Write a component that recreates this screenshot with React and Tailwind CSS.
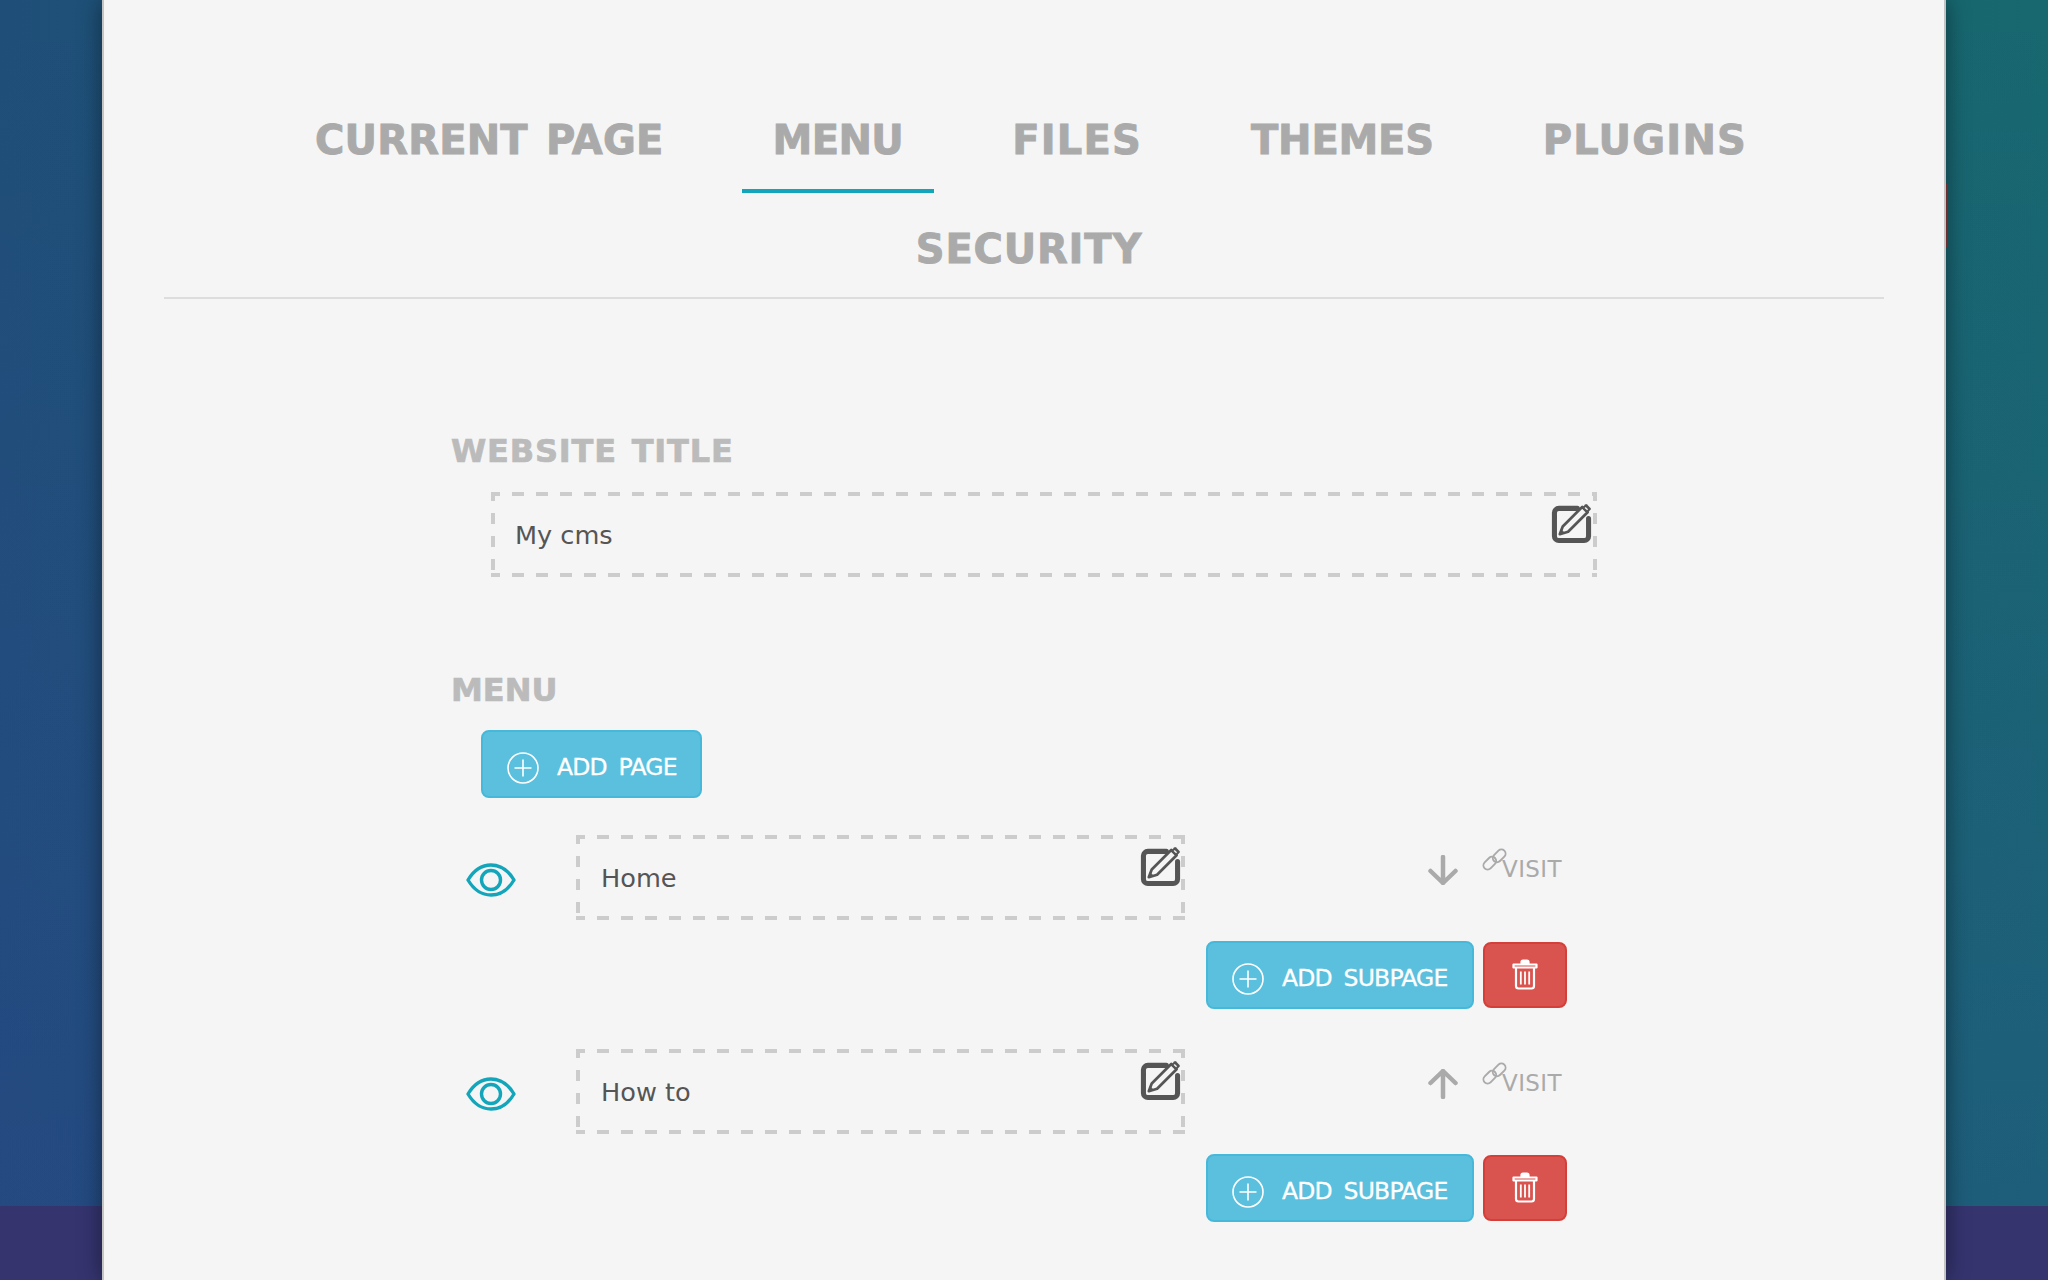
import React from 'react';

const dashed =
  "bg-[repeating-linear-gradient(90deg,#ccc_-3px_9px,transparent_9px_21px),repeating-linear-gradient(90deg,#ccc_-3px_9px,transparent_9px_21px),repeating-linear-gradient(180deg,#ccc_-2px_9px,transparent_9px_21px),repeating-linear-gradient(180deg,#ccc_-2px_9px,transparent_9px_21px)] bg-[size:100%_4px,100%_4px,4px_100%,4px_100%] bg-[position:0_0,0_100%,0_0,100%_0] bg-no-repeat";

function EditIcon({ className }) {
  return (
    <svg viewBox="0 0 40 40" className={`${className} overflow-visible`} fill="none">
      <path d="M26 4.500H7A4.500 4.500 0 0 0 2.500 9v24A4.500 4.500 0 0 0 7 37.500h26a4.500 4.500 0 0 0 4.500-4.500V15" stroke="#555" strokeWidth="5.200" strokeLinecap="round" />
      <path d="M11 23L31 3l5.500 5.500-20 20-8.500 2.500z" fill="#f5f5f5" stroke="#555" strokeWidth="2.800" strokeLinejoin="round" />
      <path d="M8 31l1.500-4.500 3 3z" fill="#555" stroke="#555" strokeWidth="1" strokeLinejoin="round" />
      <path d="M30.500 4l3.500-3.500a1.500 1.500 0 0 1 2 0l3.500 3.500a1.500 1.500 0 0 1 0 2L36 9.500z" fill="#555" />
      <path d="M34.500 3l2.500 2.500-1 1L33.500 4z" fill="#f5f5f5" />
    </svg>
  );
}

function PlusCircle() {
  return (
    <svg viewBox="0 0 32 32" className="w-8 h-8 shrink-0" fill="none" stroke="#fff" strokeWidth="1.600">
      <circle cx="16" cy="16" r="15" />
      <path d="M16 7.500v17M7.500 16h17" />
    </svg>
  );
}

function EyeIcon() {
  return (
    <svg viewBox="0 0 50 34" className="w-[50px] h-[34px]" fill="none" stroke="#13a5ba" strokeWidth="3.400">
      <path d="M2 17C8 7 16 2 25 2s17 5 23 15c-6 10-14 15-23 15S8 27 2 17z" strokeLinejoin="round" />
      <circle cx="25" cy="17" r="9.500" />
    </svg>
  );
}

function TrashIcon() {
  return (
    <svg viewBox="0 0 26 31" className="w-[26px] h-[31px] -mt-[2px]" fill="none" stroke="#fff" strokeWidth="2.200" strokeLinejoin="round">
      <path d="M1.500 5.500h23v3h-23z" />
      <path d="M9.500 5V3a1.500 1.500 0 0 1 1.500-1.500h4A1.500 1.500 0 0 1 16.500 3v2" fill="#fff" />
      <path d="M4 8.500V27a2.500 2.500 0 0 0 2.500 2.500h13A2.500 2.500 0 0 0 22 27V8.500" />
      <path d="M8.800 12.500v13M13 12.500v13M17.200 12.500v13" strokeWidth="1.800" />
    </svg>
  );
}

function ArrowIcon({ up }) {
  return (
    <svg viewBox="0 0 30 30" className={up ? 'w-[30px] h-[30px] rotate-180' : 'w-[30px] h-[30px]'} fill="none" stroke="#aaa" strokeWidth="4.500" strokeLinecap="round" strokeLinejoin="round">
      <path d="M15 2v26M2.500 16L15 28l12.500-12" />
    </svg>
  );
}

function LinkIcon() {
  return (
    <svg viewBox="0 0 24 24" className="w-[25px] h-[25px] shrink-0" fill="none" stroke="#aaa" strokeWidth="1.800">
      <rect x="0.500" y="11.500" width="14" height="8" rx="4" transform="rotate(-45 7.500 15.500)" />
      <rect x="9.500" y="4.500" width="14" height="8" rx="4" transform="rotate(-45 16.500 8.500)" />
    </svg>
  );
}

function AddButton({ label, className }) {
  return (
    <button className={`flex items-center h-[68px] bg-[#5bc0de] border-2 border-[#46b8da] rounded-lg pl-[24px] pt-[7px] text-white text-[23.5px] leading-none tracking-[-0.8px] [word-spacing:5px] [-webkit-text-stroke:0.3px_#fff] ${className}`}>
      <PlusCircle />
      <span className="ml-[18px]">{label}</span>
    </button>
  );
}

function PageRow({ title, up, buttonGap }) {
  return (
    <div className="mb-10">
      <div className="flex">
        <div className="w-[124px] h-[85px] flex items-center pl-[14px] pt-[5px]">
          <EyeIcon />
        </div>
        <div className={`relative w-[609px] h-[85px] flex items-center pl-[25px] pt-[2px] text-[25.6px] text-[#555] ${dashed}`}>
          {title}
          <EditIcon className="absolute right-[5px] top-[12px] w-[39px] h-[39px]" />
        </div>
        <div className="ml-[243px] mt-5">
          <ArrowIcon up={up} />
        </div>
        <div className="ml-[24px] mt-[12px] flex items-start text-[#aaa] text-[23px] tracking-[0.4px] leading-none">
          <LinkIcon />
          <span className="mt-[11px] -ml-[5px]">VISIT</span>
        </div>
      </div>
      <div className={`flex items-center gap-[9px] ml-[754px] ${buttonGap}`}>
        <AddButton label="ADD SUBPAGE" className="w-[268px]" />
        <button className="w-[84px] h-[66px] flex items-center justify-center bg-[#d9534f] border-2 border-[#d43f3a] rounded-lg">
          <TrashIcon />
        </button>
      </div>
    </div>
  );
}

const tabs = [
  { label: 'CURRENT PAGE', cls: 'tracking-[0.2px] [word-spacing:4px]' },
  { label: 'MENU', cls: 'tracking-[-0.6px]' },
  { label: 'FILES', cls: 'tracking-[1.200px]' },
  { label: 'THEMES', cls: 'tracking-[-0.2px]' },
  { label: 'PLUGINS', cls: 'tracking-[1.200px]' },
  { label: 'SECURITY', cls: 'tracking-[0.8px] mr-1' },
];

export default function App() {
  return (
    <div className="relative h-screen overflow-hidden font-['DejaVu_Sans',sans-serif] bg-[linear-gradient(to_top,#35346f_74px,transparent_74px),linear-gradient(to_bottom,rgba(60,50,170,0),rgba(60,50,170,0.2)),linear-gradient(to_right,#1f4f78,#17686f)]">
      <div className="absolute left-[1946px] top-[184px] w-[2px] h-[63px] bg-[#8a3b3b]" />
      <div className="relative mx-[102px] h-full bg-[#f5f5f5] border-x-2 border-[#c4c4c4] shadow-[0_0_22px_rgba(0,0,0,0.45)]">
        <div className="mx-[60px] pt-[116px] border-b-2 border-[#ddd]">
          <ul className="flex flex-wrap justify-center gap-x-[47px] gap-y-8 pl-[14px] -mb-[5px]">
            {tabs.map((t) => (
              <li
                key={t.label}
                className={`px-[31px] pb-[25px] text-[40px] leading-[48px] font-bold text-[#aaa] [-webkit-text-stroke:0.9px_#aaa] border-b-4 whitespace-nowrap ${t.cls} ${t.label === 'MENU' ? 'border-[#13a5ba]' : 'border-transparent'}`}
              >
                {t.label}
              </li>
            ))}
          </ul>
        </div>

        <div className="ml-[347px] w-[1146px] pt-[132px]">
          <h2 className="text-[32px] leading-10 font-bold text-[#bbb] tracking-[0.8px] [word-spacing:3px] [-webkit-text-stroke:0.7px_#bbb]">WEBSITE TITLE</h2>
          <div className={`relative ml-[40px] mt-[21px] w-[1106px] h-[85px] flex items-center pl-[24px] pt-[2px] text-[25.6px] text-[#555] ${dashed}`}>
            My cms
            <EditIcon className="absolute right-[6px] top-[12px] w-[39px] h-[39px]" />
          </div>

          <h2 className="mt-[93px] text-[32px] leading-10 font-bold text-[#bbb] [-webkit-text-stroke:0.7px_#bbb]">MENU</h2>
          <AddButton label="ADD PAGE" className="ml-[30px] mt-[20px] w-[221px]" />

          <div className="ml-px mt-[37px]">
            <PageRow title="Home" buttonGap="mt-[21px]" />
            <PageRow title="How to" up buttonGap="mt-[20px]" />
          </div>
        </div>
      </div>
    </div>
  );
}
